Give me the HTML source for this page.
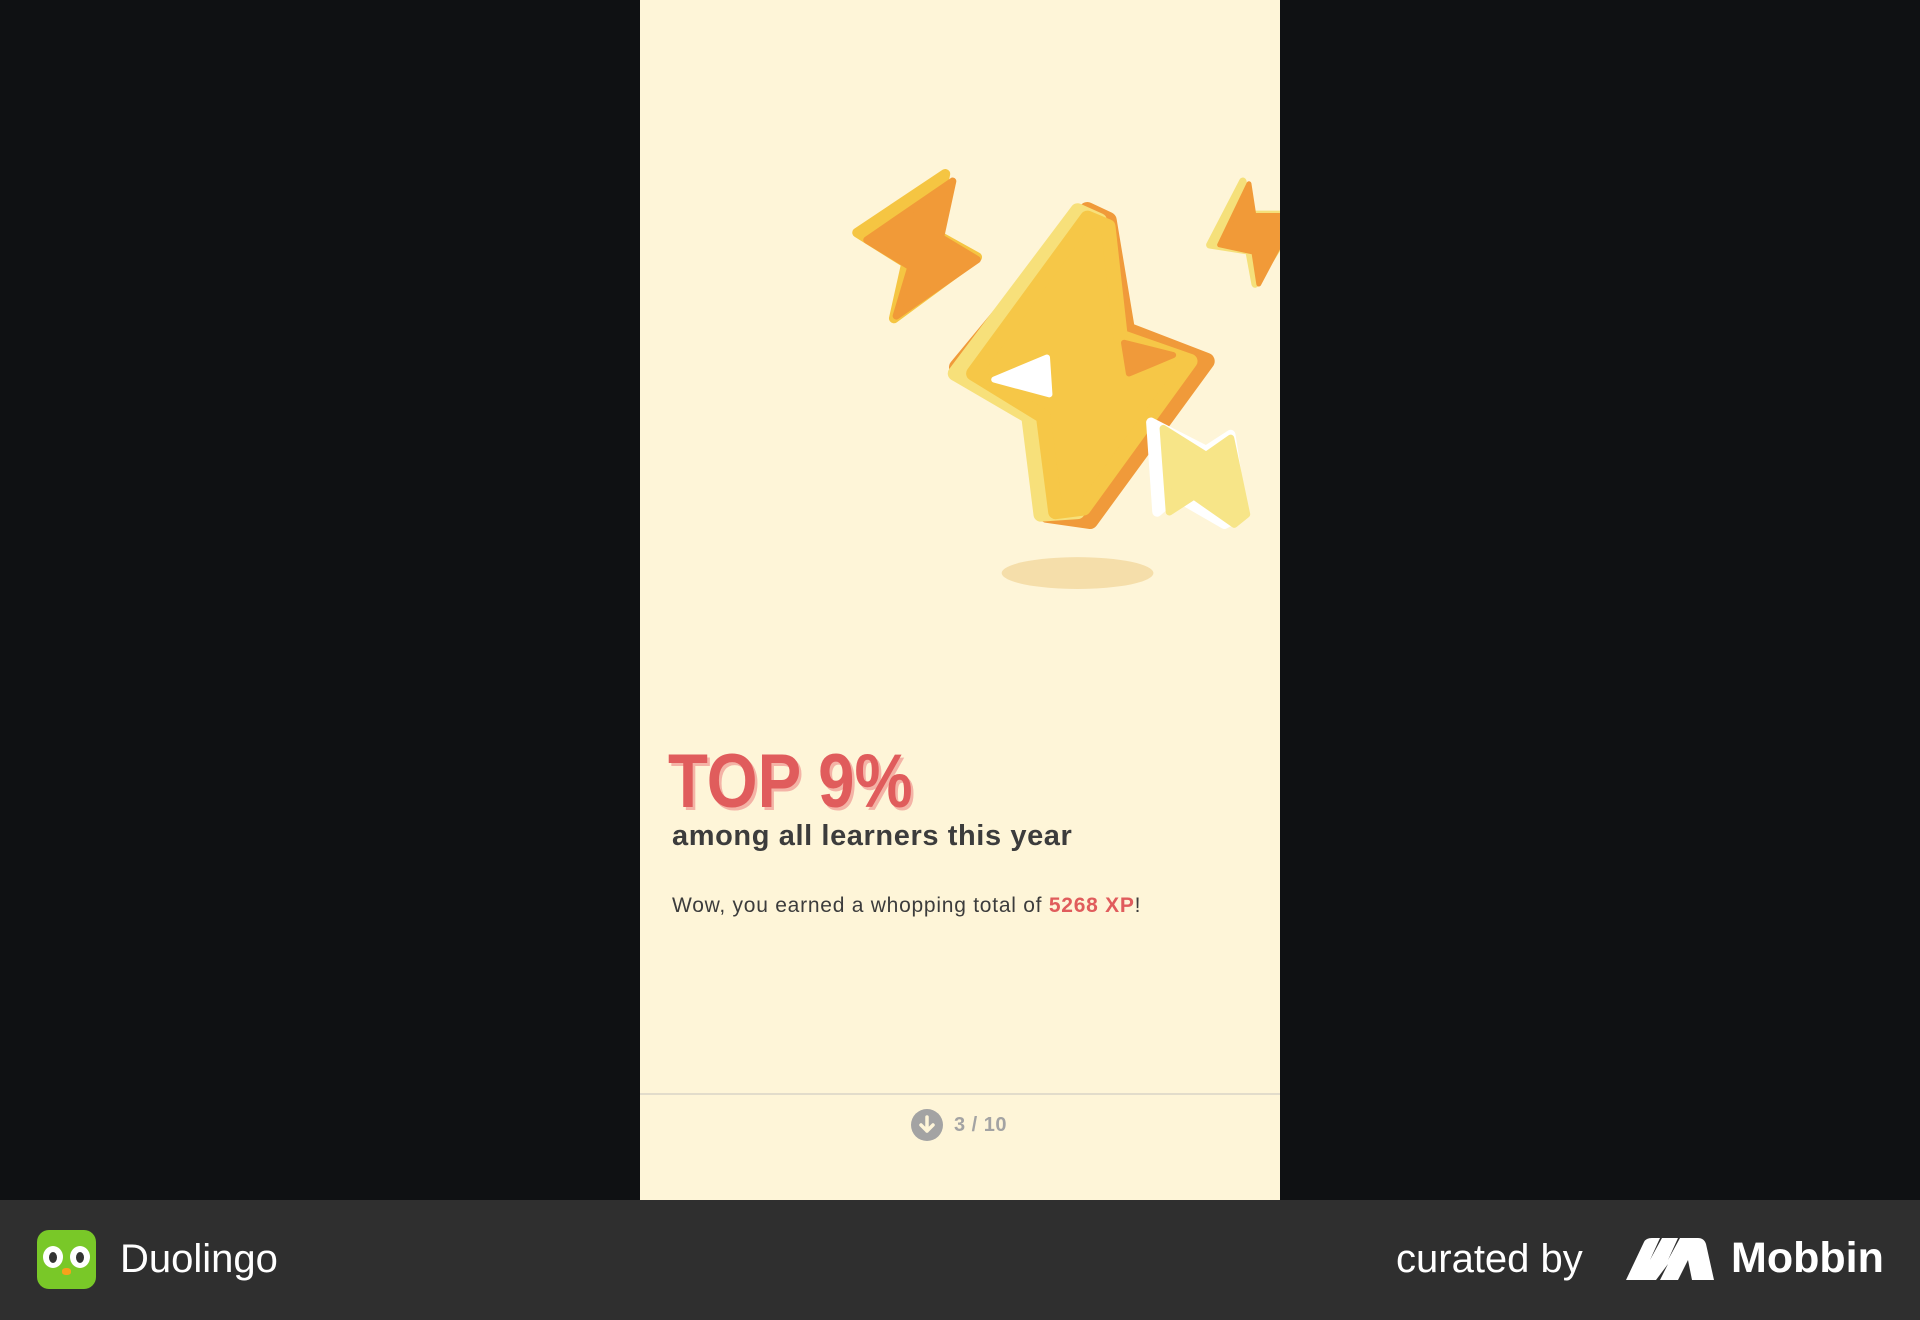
<!DOCTYPE html>
<html><head><meta charset="utf-8"><style>
html,body{margin:0;padding:0}
body{width:1920px;height:1320px;background:#0f1113;position:relative;overflow:hidden;font-family:"Liberation Sans",sans-serif}
.phone{position:absolute;left:640px;top:0;width:640px;height:1200px;background:#fef5d8}
.bar{position:absolute;left:0;top:1200px;width:1920px;height:120px;background:#2f2f2f}
</style></head><body>
<div class="phone">
<svg style="position:absolute;left:0;top:0" width="640" height="1200" viewBox="523 0 522 980">
<ellipse cx="880" cy="468" rx="62" ry="13" fill="#f5deaa"/>
<g stroke-linejoin="round" stroke-linecap="round">
<path d="M700 190 L772 142 L762 190 L798 210 L730 260 L740 215 Z" fill="#f5c542" stroke="#f5c542" stroke-width="8"/>
<path d="M708 196 L778 148 L768 194 L798 212 L732 258 L744 218 Z" fill="#f19a38" stroke="#f19a38" stroke-width="6"/>
<path d="M988 200 L1015 148 L1020 175 L1045 175 L1045 200 L1025 232 L1020 205 Z" fill="#f5e07a" stroke="#f5e07a" stroke-width="6"/>
<path d="M996 200 L1020 150 L1024 176 L1045 176 L1045 200 L1028 232 L1024 206 Z" fill="#f19a38" stroke="#f19a38" stroke-width="4"/>
<path d="M888 172 L782 300 L845 335 L855 420 L890 425 L985 295 L920 270 L905 180 Z" fill="#f09a3a" stroke="#f09a3a" stroke-width="14"/>
<path d="M880 172 L780 305 L840 340 L850 420 L880 418 L970 295 L912 275 L898 180 Z" fill="#f7e07a" stroke="#f7e07a" stroke-width="12"/>
<path d="M888 178 L795 305 L852 340 L862 418 L885 415 L972 295 L915 275 L905 185 Z" fill="#f6c747" stroke="#f6c747" stroke-width="12"/>
<path d="M812 310 L855 292 L857 322 Z" fill="#fff" stroke="#fff" stroke-width="5"/>
<path d="M918 280 L958 290 L922 305 Z" fill="#f09a3a" stroke="#f09a3a" stroke-width="5"/>
<path d="M940 345 L945 418 L960 405 L1000 428 L1015 420 L1005 355 L985 368 Z" fill="#fff" stroke="#fff" stroke-width="8"/>
<path d="M950 350 L955 418 L975 405 L1008 428 L1018 420 L1005 358 L985 372 Z" fill="#f7e588" stroke="#f7e588" stroke-width="6"/>
</g>
</svg>
<div style="position:absolute;left:28px;top:738px;font-size:76px;font-weight:bold;color:#e05c5c;text-shadow:3px 3px 0 #f4b3a6;letter-spacing:0px;transform:scaleX(0.86);transform-origin:left top">TOP 9%</div>
<div style="position:absolute;left:32px;top:820px;font-size:29px;font-weight:bold;color:#3c3c3c;letter-spacing:0.6px">among all learners this year</div>
<div style="position:absolute;left:32px;top:894px;font-size:21px;color:#3c3c3c;letter-spacing:0.75px">Wow, you earned a whopping total of <b style="color:#e05c5c">5268 XP</b>!</div>
<div style="position:absolute;left:0;top:1093px;width:640px;height:2px;background:#e2dccb"></div>
<div style="position:absolute;left:271px;top:1109px;width:32px;height:32px;border-radius:50%;background:#a3a3a3"><svg width="32" height="32" viewBox="0 0 32 32"><path d="M16 8v14M10 16l6 6 6-6" stroke="#fef5d8" stroke-width="3.5" fill="none" stroke-linecap="round" stroke-linejoin="round"/></svg></div>
<div style="position:absolute;left:314px;top:1114px;font-size:20px;font-weight:bold;color:#a3a3a3;letter-spacing:0.5px">3 / 10</div>
</div>
<div class="bar">
<div style="position:absolute;left:37px;top:30px;width:59px;height:59px;border-radius:12px;background:#79c828">
<div style="position:absolute;left:6px;top:16px;width:20px;height:22px;border-radius:50%;background:#fff"></div>
<div style="position:absolute;left:33px;top:16px;width:20px;height:22px;border-radius:50%;background:#fff"></div>
<div style="position:absolute;left:12px;top:22px;width:8px;height:11px;border-radius:50%;background:#333"></div>
<div style="position:absolute;left:39px;top:22px;width:8px;height:11px;border-radius:50%;background:#333"></div>
<div style="position:absolute;left:25px;top:38px;width:9px;height:7px;border-radius:40%;background:#f7a21b"></div>
</div>
<div style="position:absolute;left:120px;top:37px;font-size:40px;color:#fff">Duolingo</div>
<div style="position:absolute;left:1396px;top:37px;font-size:40px;color:#fff">curated by</div>
<svg style="position:absolute;left:1626px;top:38px" width="88" height="42" viewBox="0 0 88 42"><path d="M0 42 L18 4 Q20 0 26 0 L34 0 L24 22 L36 0 L52 0 L42 22 L54 0 L72 0 Q78 0 80 6 L88 42 L66 42 L62 22 L52 42 L34 42 L42 26 L30 42 Z" fill="#fff"/></svg>
<div style="position:absolute;left:1731px;top:34px;font-size:43px;font-weight:bold;color:#fff">Mobbin</div>
</div>
</body></html>
